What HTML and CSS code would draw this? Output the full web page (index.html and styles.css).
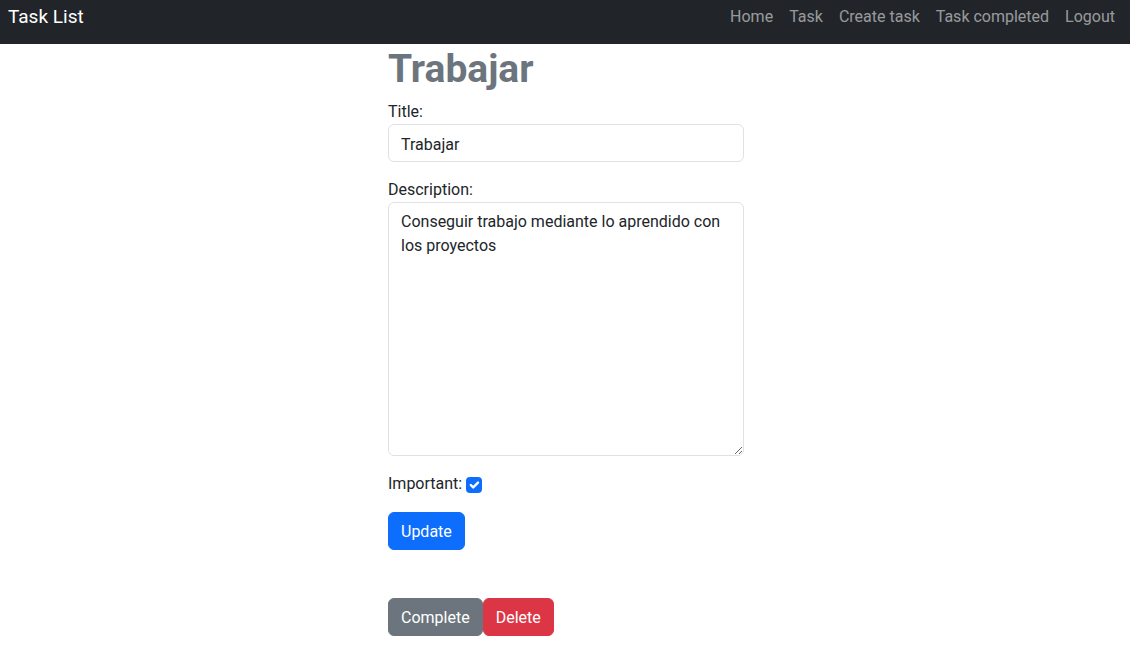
FILE: index.html
```html
<!DOCTYPE html>
<html lang="en">
<head>
<meta charset="utf-8">
<title>Task List</title>
<link rel="stylesheet" href="styles.css">
</head>
<body>
<nav class="navbar">
  <a class="brand" href="#">Task List</a>
  <ul class="nav-links">
    <li><a href="#">Home</a></li>
    <li><a href="#">Task</a></li>
    <li><a href="#">Create task</a></li>
    <li><a href="#">Task completed</a></li>
    <li><a href="#">Logout</a></li>
  </ul>
</nav>
<main class="content">
  <h1 class="task-title">Trabajar</h1>
  <form class="task-form">
    <label class="field-label" for="title">Title:</label>
    <input class="field-input" id="title" type="text" value="Trabajar">
    <label class="field-label" for="desc">Description:</label>
    <textarea class="field-area" id="desc">Conseguir trabajo mediante lo aprendido con los proyectos</textarea>
    <div class="check-row">
      <label for="imp">Important:</label>
      <span class="checkbox" id="imp"><svg viewBox="0 0 20 20" width="16" height="16"><path d="m6 10 3 3 6-6" fill="none" stroke="#fff" stroke-width="3" stroke-linecap="round" stroke-linejoin="round"/></svg></span>
    </div>
    <div><button class="btn btn-primary" type="button">Update</button></div>
  </form>
  <div class="actions">
    <button class="btn btn-secondary" type="button">Complete</button><button class="btn btn-danger" type="button">Delete</button>
  </div>
</main>
</body>
</html>
```
FILE: styles.css
```css
* { box-sizing: border-box; }
body {
  margin: 0;
  font-family: Roboto, "Liberation Sans", sans-serif;
  font-size: 16px;
  line-height: 1.5;
  color: #212529;
  background: #fff;
}
.navbar {
  height: 44px;
  background: #212529;
  display: flex;
  align-items: center;
  justify-content: space-between;
  padding: 0 7px 0 8px;
}
.brand {
  color: #fff;
  text-decoration: none;
  font-size: 19px;
  line-height: 30px;
  margin-top: -10px;
}
.nav-links {
  list-style: none;
  margin: -10px 0 0 0;
  padding: 0;
  display: flex;
}
.nav-links a {
  display: block;
  padding: 0 8px;
  color: rgba(255,255,255,.55);
  text-decoration: none;
  line-height: 24px;
}
.content {
  width: 356px;
  margin-left: calc(50% - 177px);
  padding-top: 1px;
}
.task-title {
  margin: 0 0 8px;
  padding-top: 1px;
  font-size: 39px;
  line-height: 46px;
  font-weight: 700;
  color: #6c757d;
}
.task-form { display: flex; flex-direction: column; }
.field-label { display: block; line-height: 24px; }
.field-input, .field-area {
  display: block;
  width: 100%;
  font: inherit;
  color: #212529;
  padding: 7px 12px 5px;
  border: 1px solid #dee2e6;
  border-radius: 6px;
  background: #fff;
  margin-bottom: 16px;
}
.field-input { height: 38px; }
.field-area { height: 254px; resize: vertical; line-height: 24px; }
.check-row {
  display: flex;
  align-items: center;
  gap: 4px;
  line-height: 24px;
  margin-bottom: 16px;
}
.checkbox {
  width: 16px;
  height: 16px;
  border-radius: 4px;
  background: #0d6efd;
  display: inline-flex;
  margin-top: 1px;
}
.btn {
  font: inherit;
  line-height: 24px;
  padding: 7px 12px 5px;
  border: 1px solid transparent;
  border-radius: 6px;
  color: #fff;
  cursor: pointer;
}
.btn-primary { background: #0d6efd; border-color: #0d6efd; }
.btn-secondary { background: #6c757d; border-color: #6c757d; }
.btn-danger { background: #dc3545; border-color: #dc3545; }
.actions { margin-top: 48px; display: flex; }
```
